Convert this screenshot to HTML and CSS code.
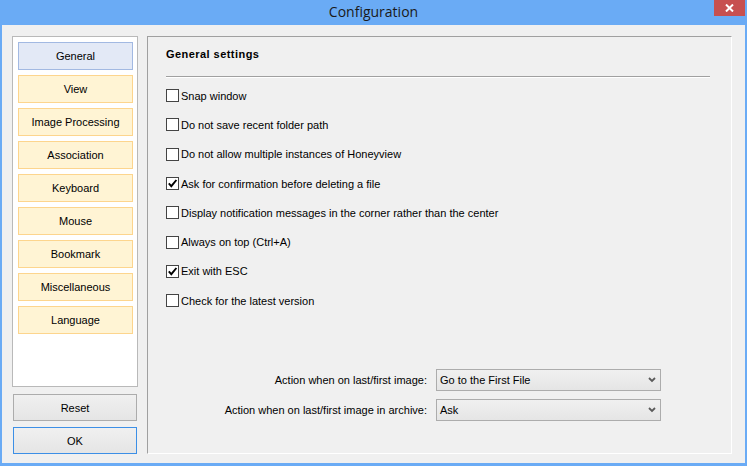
FILE: index.html
```html
<!DOCTYPE html>
<html lang="en">
<head>
  <meta charset="UTF-8">
  <title>Configuration</title>
  <link rel="stylesheet" href="styles.css">
</head>
<body>
  <div class="window">
    <div class="titlebar">
      <span class="title">Configuration</span>
      <div class="close">
        <svg width="9" height="8" viewBox="0 0 9 8">
          <path d="M1 0.5 L8 7.5 M8 0.5 L1 7.5" stroke="#fff" stroke-width="2" fill="none"/>
        </svg>
      </div>
    </div>

    <div class="client">
      <div class="side">
        <div class="pages">
          <div class="page active">General</div>
          <div class="page">View</div>
          <div class="page">Image Processing</div>
          <div class="page">Association</div>
          <div class="page">Keyboard</div>
          <div class="page">Mouse</div>
          <div class="page">Bookmark</div>
          <div class="page">Miscellaneous</div>
          <div class="page">Language</div>
        </div>
        <button class="btn reset">Reset</button>
        <button class="btn ok">OK</button>
      </div>

      <div class="panel">
        <div class="heading">General settings</div>
        <div class="sep"></div>

        <div class="checks">
          <div class="check"><span class="box"></span>Snap window</div>
          <div class="check"><span class="box"></span>Do not save recent folder path</div>
          <div class="check"><span class="box"></span>Do not allow multiple instances of Honeyview</div>
          <div class="check"><span class="box on"><svg width="11" height="11" viewBox="0 0 11 11"><path d="M1.8 5.4 L4.3 8.2 L9.4 2" stroke="#000" stroke-width="1.9" fill="none"/></svg></span>Ask for confirmation before deleting a file</div>
          <div class="check"><span class="box"></span>Display notification messages in the corner rather than the center</div>
          <div class="check"><span class="box"></span>Always on top (Ctrl+A)</div>
          <div class="check"><span class="box on"><svg width="11" height="11" viewBox="0 0 11 11"><path d="M1.8 5.4 L4.3 8.2 L9.4 2" stroke="#000" stroke-width="1.9" fill="none"/></svg></span>Exit with ESC</div>
          <div class="check"><span class="box"></span>Check for the latest version</div>
        </div>

        <div class="combos">
          <label>Action when on last/first image:</label>
          <div class="combo">
            <span>Go to the First File</span>
            <svg width="8" height="6" viewBox="0 0 8 6"><path d="M1 1 L4 4 L7 1" stroke="#5a5a5a" stroke-width="1.8" fill="none"/></svg>
          </div>
          <label>Action when on last/first image in archive:</label>
          <div class="combo">
            <span>Ask</span>
            <svg width="8" height="6" viewBox="0 0 8 6"><path d="M1 1 L4 4 L7 1" stroke="#5a5a5a" stroke-width="1.8" fill="none"/></svg>
          </div>
        </div>
      </div>
    </div>
  </div>
</body>
</html>
```

FILE: styles.css
```css
body {
  margin: 0;
  padding: 0;
  font-family: 'Liberation Sans', Arial, sans-serif;
  font-size: 11px;
  color: #000;
}

.window {
  width: 747px;
  height: 466px;
  background: #6aabf5;
  display: flex;
  flex-direction: column;
}

.titlebar {
  position: relative;
  height: 25px;
  display: flex;
  justify-content: center;
}
.title {
  font-family: 'Open Sans', 'Liberation Sans', sans-serif;
  font-size: 14px;
  line-height: 23px;
  color: #1a1a1a;
}
.close {
  position: absolute;
  top: 0;
  right: 2px;
  width: 31px;
  height: 16px;
  background: #c75050;
  display: flex;
  align-items: center;
  justify-content: center;
}

.client {
  flex: 1;
  margin: 0 2px 3px 2px;
  background: #f0f0f0;
  display: flex;
  gap: 9px;
  padding: 11px 13px 9px 10px;
}

/* left column */
.side {
  width: 126px;
  display: flex;
  flex-direction: column;
}
.pages {
  height: 351px;
  box-sizing: border-box;
  background: #fff;
  border: 1px solid #b9b9b9;
  padding: 5px 4px 0 5px;
}
.page {
  height: 28px;
  box-sizing: border-box;
  margin-bottom: 5px;
  background: #fff4d4;
  border: 1px solid #fdd58d;
  display: flex;
  align-items: center;
  justify-content: center;
}
.page.active {
  background: #e3e9f6;
  border-color: #a2b9e2;
}

.btn {
  font-family: inherit;
  font-size: 11px;
  color: #000;
  height: 27px;
  margin: 0 1px;
  background: linear-gradient(#f0f0f0, #e5e5e5);
  border: 1px solid #acacac;
  padding: 0;
}
.reset {
  margin-top: 7px;
}
.ok {
  margin-top: 6px;
  border-color: #3c8fe6;
}

/* right panel */
.panel {
  flex: 1;
  border-top: 1px solid #a0a0a0;
  border-left: 1px solid #a0a0a0;
  border-right: 1px solid #fff;
  border-bottom: 1px solid #fff;
  padding: 10px 21px 0 18px;
  display: flex;
  flex-direction: column;
}
.heading {
  font-weight: bold;
  line-height: 14px;
  letter-spacing: 0.45px;
}
.sep {
  margin-top: 15px;
  height: 0;
  border-top: 1px solid #a0a0a0;
  border-bottom: 1px solid #fff;
}

.checks {
  margin-top: 3px;
}
.check {
  height: 29.3px;
  display: flex;
  align-items: center;
}
.box {
  width: 13px;
  height: 13px;
  box-sizing: border-box;
  border: 1px solid #444;
  background: #fff;
  margin-right: 2px;
  display: flex;
  align-items: center;
  justify-content: center;
}

.combos {
  margin-top: auto;
  margin-bottom: 32px;
  margin-right: 49px;
  display: grid;
  grid-template-columns: auto 225px;
  column-gap: 9px;
  row-gap: 8px;
  justify-content: end;
  align-items: center;
}
.combos label {
  text-align: right;
}
.combo {
  height: 22px;
  box-sizing: border-box;
  border: 1px solid #acacac;
  background: linear-gradient(#f0f0f0, #e5e5e5);
  display: flex;
  align-items: center;
  padding: 0 4px 0 3px;
}
.combo svg {
  margin-left: auto;
}
```
